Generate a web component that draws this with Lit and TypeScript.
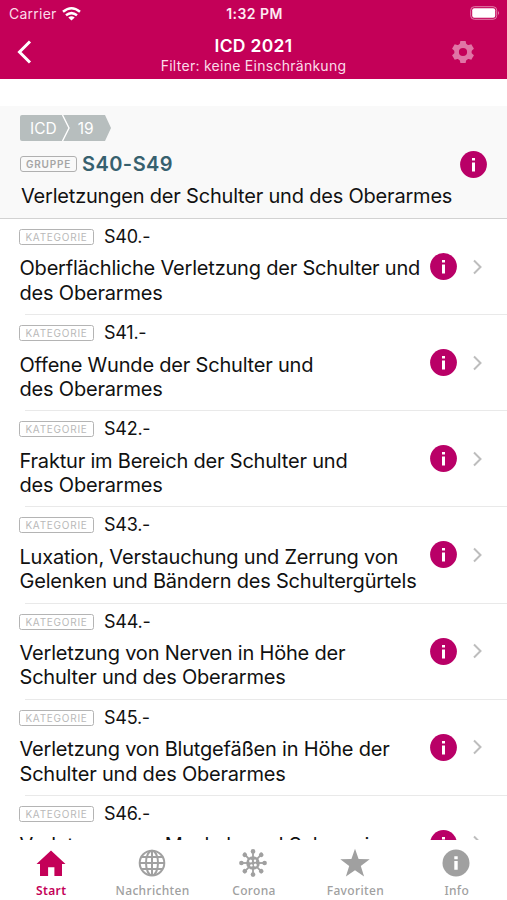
import { LitElement, html, css, svg } from "lit";
import { customElement, property } from "lit/decorators.js";

const rows = [
  { code: "S40.-", lines: ["Oberflächliche Verletzung der Schulter und", "des Oberarmes"] },
  { code: "S41.-", lines: ["Offene Wunde der Schulter und", "des Oberarmes"] },
  { code: "S42.-", lines: ["Fraktur im Bereich der Schulter und", "des Oberarmes"] },
  { code: "S43.-", lines: ["Luxation, Verstauchung und Zerrung von", "Gelenken und Bändern des Schultergürtels"] },
  { code: "S44.-", lines: ["Verletzung von Nerven in Höhe der", "Schulter und des Oberarmes"] },
  { code: "S45.-", lines: ["Verletzung von Blutgefäßen in Höhe der", "Schulter und des Oberarmes"] },
  { code: "S46.-", lines: ["Verletzung von Muskeln und Sehnen in"] },
];

const ray = (a: number) => svg`<g transform="rotate(${a} 15 15)"><path d="M15 10V4" stroke="currentColor" stroke-width="1.8"/><circle cx="15" cy="3.4" r="2.3"/></g>`;
const tooth = (a: number) => svg`<path transform="rotate(${a} 12 12)" d="M8.4 5.4L9.4.9h5.2l1 4.5z"/>`;

const tabs = [
  { label: "Start", active: true, icon: svg`<path d="M15 2.5L29.5 16H26v12h-7.6v-8.8h-6.3V28H4V16H.5z"/>` },
  { label: "Nachrichten", active: false, icon: svg`<g fill="none" stroke="currentColor" stroke-width="2"><circle cx="15" cy="15" r="12.3"/><ellipse cx="15" cy="15" rx="6" ry="12.3"/><path d="M15 2.5v25M2.5 15h25M4.5 9h21M4.5 21h21"/></g>` },
  { label: "Corona", active: false, icon: svg`<circle cx="15" cy="15" r="6.8"/>${[0, 45, 90, 135, 180, 225, 270, 315].map(ray)}<g fill="#fff"><circle cx="12.6" cy="13" r="1.5"/><circle cx="17" cy="12.7" r="1.2"/><circle cx="13.4" cy="17.4" r="1.2"/><circle cx="17.3" cy="17" r="1.5"/></g>` },
  { label: "Favoriten", active: false, icon: svg`<path d="M15 .8l3.6 10.3 11.1.1-8.9 6.8 3.3 10.5L15 22.2l-9.1 6.3L9.2 18 .3 11.2l11.1-.1z"/>` },
  { label: "Info", active: false, icon: svg`<circle cx="15" cy="15" r="13.5"/><path fill="#fff" d="M13.3 8.2h3.4v3h-3.4zM13.3 12.9h3.4v8.9h-3.4z"/>` },
];

@customElement("info-badge")
export class InfoBadge extends LitElement {
  static styles = css`
    :host { display: block; width: 27px; height: 27px; flex: none; }
    .icon { display: block; }
  `;
  render() {
    return html`<svg class="icon" width="27" height="27" viewBox="0 0 27 27"><circle cx="13.5" cy="13.5" r="13.4" fill="#b90067"/><path fill="#fff" d="M12 7h3v2.6h-3zM12 11.4h3V20.4h-3z"/></svg>`;
  }
}

@customElement("code-row")
export class CodeRow extends LitElement {
  @property({ attribute: false }) row = rows[0];
  static styles = css`
    :host { display: block; height: 96.15px; position: relative; }
    .head { display: flex; align-items: center; height: 22px; padding: 7px 0 0 19px; }
    .tag { box-sizing: border-box; width: 75px; height: 16px; border: 1.5px solid #b4b4b4; border-radius: 2.5px; color: #b9b9b9; font-size: 10px; line-height: 15px; letter-spacing: 0.75px; text-align: center; }
    .code { margin-left: 10px; font-size: 18px; letter-spacing: -0.25px; line-height: 22px; }
    .body { display: flex; padding-left: 19.5px; }
    .text { width: 410px; padding-top: 8.4px; font-size: 20px; line-height: 24.5px; letter-spacing: -0.2px; white-space: nowrap; }
    .badge { margin-top: 5px; }
    .chevron { margin: 10.5px 0 0 15px; }
    .rule { height: 1px; position: absolute; bottom: 0; left: 25px; right: 0; background: #e9e9e9; }
  `;
  render() {
    const { code, lines } = this.row;
    return html`<div class="head"><span class="tag">KATEGORIE</span><span class="code">${code}</span></div>
      <div class="body"><div class="text">${lines.map((l) => html`<div>${l}</div>`)}</div><info-badge class="badge"></info-badge>
      <svg class="chevron" width="12" height="16" viewBox="0 0 12 16"><path d="M2 1.5L8.5 8 2 14.5" fill="none" stroke="#bdbdbd" stroke-width="2"/></svg></div>
      <div class="rule"></div>`;
  }
}

@customElement("app-root")
export class AppRoot extends LitElement {
  static styles = css`
    :host { display: flex; flex-direction: column; height: 900px; width: 507px; overflow: hidden; background: #fff; color: #111; font-family: Inter, "Liberation Sans", sans-serif; }
    .top { background: #c40058; height: 79px; flex: none; color: #fff; }
    .status { display: grid; grid-template-columns: 1fr auto 1fr; align-items: center; height: 27px; padding: 0 7px 0 9px; font-size: 14px; }
    .carrier { display: flex; align-items: center; gap: 5px; color: #fbdce9; letter-spacing: 0.25px; }
    .time { font-weight: 600; font-size: 14px; letter-spacing: 0.45px; color: #fdeaf2; }
    .battery { justify-self: end; }
    .nav { display: grid; grid-template-columns: 60px 1fr 60px; height: 52px; align-items: center; }
    .back { margin: -2px 0 0 17px; }
    .titles { text-align: center; padding-top: 5px; }
    .title { font-size: 17.5px; line-height: 20px; font-weight: 600; letter-spacing: 0.3px; }
    .filter { font-size: 14px; line-height: 19px; letter-spacing: 0.27px; color: #fbdce9; }
    .gear { margin: -2px 0 0 4px; }
    .group { box-sizing: border-box; flex: none; height: 113px; margin-top: 27px; padding: 9px 20px 0 20px; background: #f9f9f9; border-bottom: 1px solid #d2d2d2; }
    .crumbs { display: grid; width: 91px; height: 26px; }
    .shape, .crumbtext { grid-area: 1 / 1; }
    .crumbtext { display: flex; gap: 21px; padding-left: 10px; color: #fff; font-size: 15.5px; line-height: 28px; }
    .grouphead { display: flex; align-items: center; height: 27px; margin-top: 10px; }
    .tag { box-sizing: border-box; width: 57px; height: 16px; margin-top: -2px; border: 1.5px solid #b0b0b0; border-radius: 3px; color: #a5a5a5; font-size: 10px; font-weight: 600; line-height: 15px; letter-spacing: 0.8px; text-align: center; }
    .range { margin: -1px 0 0 5px; flex: 1; font-size: 20px; font-weight: 600; letter-spacing: 0.45px; color: #36606e; }
    .desc { font-size: 20px; line-height: 26px; margin: 5px 0 0 1px; letter-spacing: -0.2px; white-space: nowrap; }
    .list { flex: 1; min-height: 0; overflow: hidden; }
    .tabs { height: 60px; flex: none; display: grid; grid-template-columns: repeat(5, 1fr); background: #fff; }
    .tab { display: flex; flex-direction: column; align-items: center; padding-top: 8px; color: #a0a0a0; font: 500 12px/18px "Noto Sans", sans-serif; letter-spacing: 0.35px; }
    .tab.active { color: #c40058; font-weight: 600; }
    .label { margin: 4px 0 0 1px; }
  `;
  render() {
    return html`
      <header class="top">
        <div class="status">
          <div class="carrier"><span>Carrier</span>
            <svg width="19" height="14" viewBox="0 0 19 14"><g fill="none" stroke="#fff" stroke-width="2.5"><path d="M1 4.8Q9.5-2.2 18 4.8M4 8.3q5.5-4.4 11 0"/></g><path fill="#fff" d="M6.3 10.4q3.2-2.3 6.4 0L9.5 13.6z"/></svg>
          </div>
          <span class="time">1:32 PM</span>
          <svg class="battery" width="30" height="15" viewBox="0 0 30 15"><rect x=".7" y=".7" width="26" height="12.6" rx="3.6" fill="none" stroke="#e281ac"/><rect x="2.2" y="2.2" width="23" height="9.6" rx="2" fill="#fff"/><path d="M28 5q2 2 0 4z" fill="#e281ac"/></svg>
        </div>
        <div class="nav">
          <svg class="back" width="15" height="24" viewBox="0 0 15 24"><path d="M13 1.5L2.5 12 13 22.5" fill="none" stroke="#fff" stroke-width="3"/></svg>
          <div class="titles"><div class="title">ICD 2021</div><div class="filter">Filter: keine Einschränkung</div></div>
          <svg class="gear" width="24" height="24" viewBox="0 0 24 24"><g fill="#e075a5"><circle cx="12" cy="12" r="6.4" fill="none" stroke="#e075a5" stroke-width="4.6"/>${[0, 60, 120, 180, 240, 300].map(tooth)}</g></svg>
        </div>
      </header>
      <section class="group">
        <div class="crumbs">
          <svg class="shape" width="91" height="26" viewBox="0 0 91 26"><path d="M2 0h83l6 13-6 13H2q-2 0-2-2V2q0-2 2-2z" fill="#b7bebe"/><path d="M42.5 0l6.5 13-6.5 13" fill="none" stroke="#fff" stroke-width="1.4"/></svg>
          <div class="crumbtext"><span>ICD</span><span>19</span></div>
        </div>
        <div class="grouphead"><span class="tag">GRUPPE</span><span class="range">S40-S49</span><info-badge></info-badge></div>
        <div class="desc">Verletzungen der Schulter und des Oberarmes</div>
      </section>
      <main class="list">${rows.map((r) => html`<code-row .row=${r}></code-row>`)}</main>
      <nav class="tabs">${tabs.map((t) => html`<div class="tab ${t.active ? "active" : ""}"><svg width="30" height="30" viewBox="0 0 30 30" fill="currentColor">${t.icon}</svg><span class="label">${t.label}</span></div>`)}</nav>`;
  }
}
